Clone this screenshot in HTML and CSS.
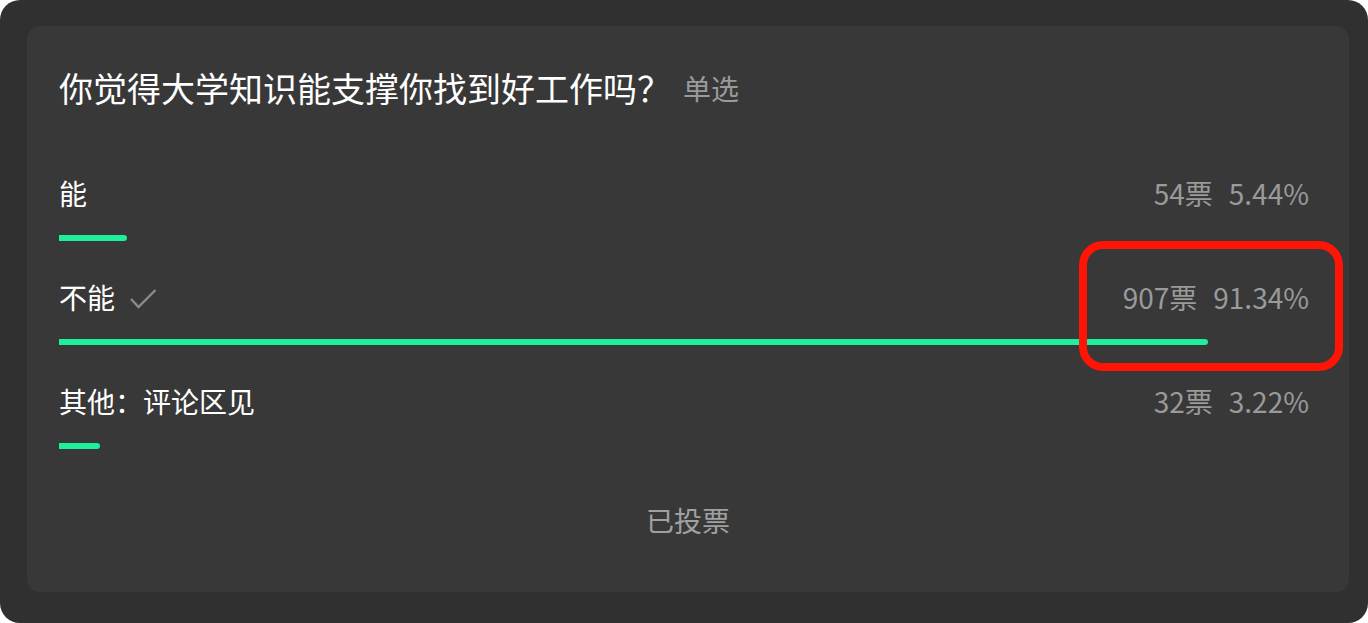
FILE: index.html
```html
<!DOCTYPE html>
<html lang="zh-CN">
<head>
  <meta charset="UTF-8" />
  <meta name="viewport" content="width=device-width, initial-scale=1.0"/>
  <title>投票</title>
  <link rel="stylesheet" href="styles.css">
</head>
<body>
  <div class="frame">
    <div class="poll">
      <h1 class="poll-title">你觉得大学知识能支撑你找到好工作吗？<span class="poll-type">单选</span></h1>

      <div class="option">
        <div class="option-head">
          <span class="option-name">能</span>
          <span class="option-stats"><span>54票</span><span>5.44%</span></span>
        </div>
        <div class="bar" style="width: 68px"></div>
      </div>

      <div class="option">
        <div class="option-head">
          <span class="option-name">不能
            <svg class="check" width="27" height="20" viewBox="0 0 27 20">
              <polyline points="1,10 8.5,18 25.5,1" fill="none" stroke="#8a8a8a" stroke-width="2.4" />
            </svg>
          </span>
          <span class="option-stats"><span>907票</span><span>91.34%</span></span>
        </div>
        <div class="bar" style="width: 1149px"></div>
      </div>

      <div class="option">
        <div class="option-head">
          <span class="option-name">其他：评论区见</span>
          <span class="option-stats"><span>32票</span><span>3.22%</span></span>
        </div>
        <div class="bar" style="width: 41px"></div>
      </div>

      <div class="poll-footer">已投票</div>
    </div>

    <!-- annotation drawn over the screenshot -->
    <div class="highlight"></div>
  </div>
</body>
</html>
```

FILE: styles.css
```css
:root {
  --frame: #303030;
  --card: #383838;
  --text: #ffffff;
  --muted: #9a9a9a;
  --green: #1ff09c;
  --red: #ff1405;
}

body {
  margin: 0;
  background: #fff;
  font-family: "Noto Sans CJK SC", "Noto Sans", sans-serif;
}

.frame {
  position: relative;
  width: 1368px;
  height: 623px;
  box-sizing: border-box;
  padding: 26px 19px 31px 27px;
  background: var(--frame);
  border-radius: 20px;
}

.poll {
  height: 566px;
  box-sizing: border-box;
  padding: 42px 40px 0 32px;
  background: var(--card);
  border-radius: 13px;
}

.poll-title {
  display: flex;
  align-items: center;
  height: 40px;
  margin: 0;
  font-size: 34px;
  font-weight: 400;
  line-height: 40px;
  color: var(--text);
}

.poll-type {
  margin-left: 12px;
  font-size: 28px;
  color: var(--muted);
}

.option {
  margin-top: 38px;
}

.option:first-of-type {
  margin-top: 67px;
}

.option-head {
  display: flex;
  justify-content: space-between;
  align-items: center;
  height: 36px;
  font-size: 28px;
  line-height: 36px;
}

.option-name {
  display: flex;
  align-items: center;
  color: var(--text);
}

.check {
  margin-left: 15px;
  margin-top: 4px;
}

.option-stats {
  display: flex;
  gap: 16px;
  color: var(--muted);
}

.bar {
  height: 6px;
  margin-top: 24px;
  background: var(--green);
  border-radius: 0 3px 3px 0;
}

.poll-footer {
  margin: 53px -40px 0 -32px;
  text-align: center;
  font-size: 28px;
  line-height: 36px;
  color: #a0a0a0;
}

.highlight {
  position: absolute;
  left: 1079px;
  top: 241px;
  width: 264px;
  height: 130px;
  box-sizing: border-box;
  border: 8px solid var(--red);
  border-radius: 24px;
}
```
